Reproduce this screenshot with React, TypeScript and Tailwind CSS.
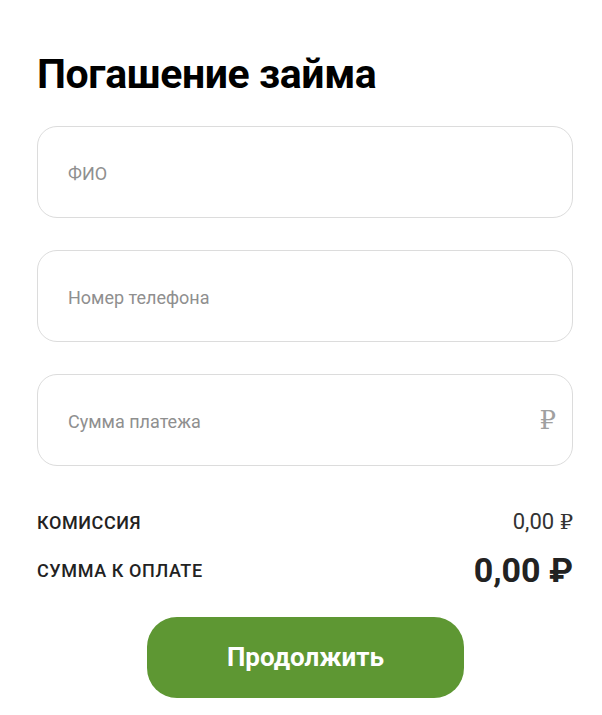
import React from "react";

function Field({ label, suffix }: { label: string; suffix?: boolean }) {
  return (
    <div className="flex h-[92px] items-center justify-between rounded-[20px] border border-[#dcdcdc] bg-white pl-[30px] pr-[16px]">
      <span className="text-[18px] text-[#8f8f8f] pt-[3px]">{label}</span>
      {suffix && (
        <span className="text-[26px] text-[#a0a0a0] font-['DejaVu_Serif',serif]">₽</span>
      )}
    </div>
  );
}

export default function App() {
  return (
    <div className="min-h-[715px] bg-white px-[37px] pt-[50px] font-['Roboto',sans-serif] text-black">
      <h1 className="text-[41px] font-bold leading-[48px] tracking-[-0.4px]">Погашение займа</h1>
      <div className="mt-[28px] flex flex-col gap-[32px] w-[536px]">
        <Field label="ФИО" />
        <Field label="Номер телефона" />
        <Field label="Сумма платежа" suffix />
      </div>
      <div className="mt-[42px] w-[536px]">
        <div className="flex items-center justify-between h-[28px]">
          <span className="text-[18px] font-medium uppercase tracking-[0.6px] text-[#222]">Комиссия</span>
          <span className="text-[22px] text-[#333]">
            0,00 <span className="text-[21px] font-['DejaVu_Serif',serif]">₽</span>
          </span>
        </div>
        <div className="mt-[14px] flex items-center justify-between h-[40px]">
          <span className="text-[18px] font-medium uppercase tracking-[0.6px] text-[#222]">Сумма к оплате</span>
          <span className="text-[34px] font-bold text-[#222]">0,00 ₽</span>
        </div>
      </div>
      <div className="mt-[27px] flex w-[536px] justify-center pl-[1px]">
        <button className="h-[81px] w-[317px] rounded-[30px] bg-[#5e9733] text-[26px] font-bold text-white">
          Продолжить
        </button>
      </div>
    </div>
  );
}
